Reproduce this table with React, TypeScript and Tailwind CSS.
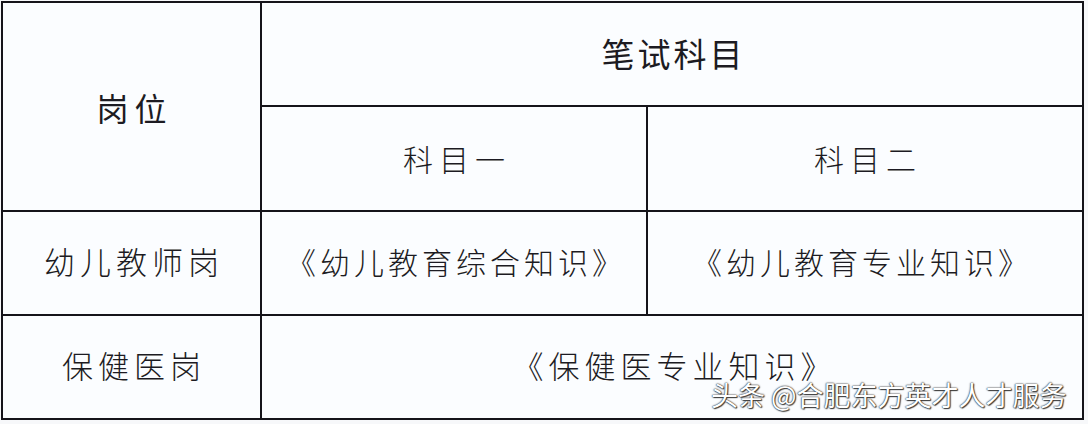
import React from 'react';

const cjk = "font-['Noto_Sans_CJK_SC',sans-serif]";
const cell = 'border-2 border-[#15141a] text-center';

export default function App() {
  return (
    <div className={`relative w-[1088px] h-[424px] bg-[#f7f8fa] ${cjk} text-[#1c1b22] overflow-hidden`}>
      <div className="pt-px pl-px">
        <table className="table-fixed border-collapse bg-[#fbfdff] w-[1081px]">
          <colgroup>
            <col className="w-[259px]" />
            <col className="w-[386px]" />
            <col className="w-[436px]" />
          </colgroup>
          <tbody>
            {/* 表头 */}
            <tr className="h-[104px]">
              <td rowSpan={2} className={`${cell} text-[32px] font-normal tracking-[6px] pl-[6px]`}>
                岗位
              </td>
              <td colSpan={2} className={`${cell} text-[33px] font-normal tracking-[3px] pl-[3px]`}>
                笔试科目
              </td>
            </tr>
            <tr className="h-[105px]">
              <td className={`${cell} text-[30px] font-light tracking-[6px] pl-[6px]`}>科目一</td>
              <td className={`${cell} text-[30px] font-light tracking-[6px] pl-[6px]`}>科目二</td>
            </tr>
            {/* 数据行 */}
            <tr className="h-[104px]">
              <td className={`${cell} text-[31px] font-light tracking-[5px] pl-[5px] pb-[4px]`}>
                幼儿教师岗
              </td>
              <td className={`${cell} text-[30px] font-light tracking-[4px] pl-[4px] pb-[4px]`}>
                《幼儿教育综合知识》
              </td>
              <td className={`${cell} text-[30px] font-light tracking-[4px] pl-[4px] pb-[4px] pr-[10px]`}>
                《幼儿教育专业知识》
              </td>
            </tr>
            <tr className="h-[104px]">
              <td className={`${cell} text-[31px] font-light tracking-[5px] pl-[5px] pb-[4px]`}>
                保健医岗
              </td>
              <td colSpan={2} className={`${cell} text-[31px] font-light tracking-[5px] pl-[5px] pb-[4px]`}>
                《保健医专业知识》
              </td>
            </tr>
          </tbody>
        </table>
      </div>

      {/* 水印 */}
      <div className="absolute left-[711px] top-[379px] text-[27px] leading-[32px] text-white font-normal whitespace-nowrap [text-shadow:0_0_1px_#222,0_0_2px_#333,1px_1px_1px_#444]">
        头条 @合肥东方英才人才服务
      </div>
    </div>
  );
}
